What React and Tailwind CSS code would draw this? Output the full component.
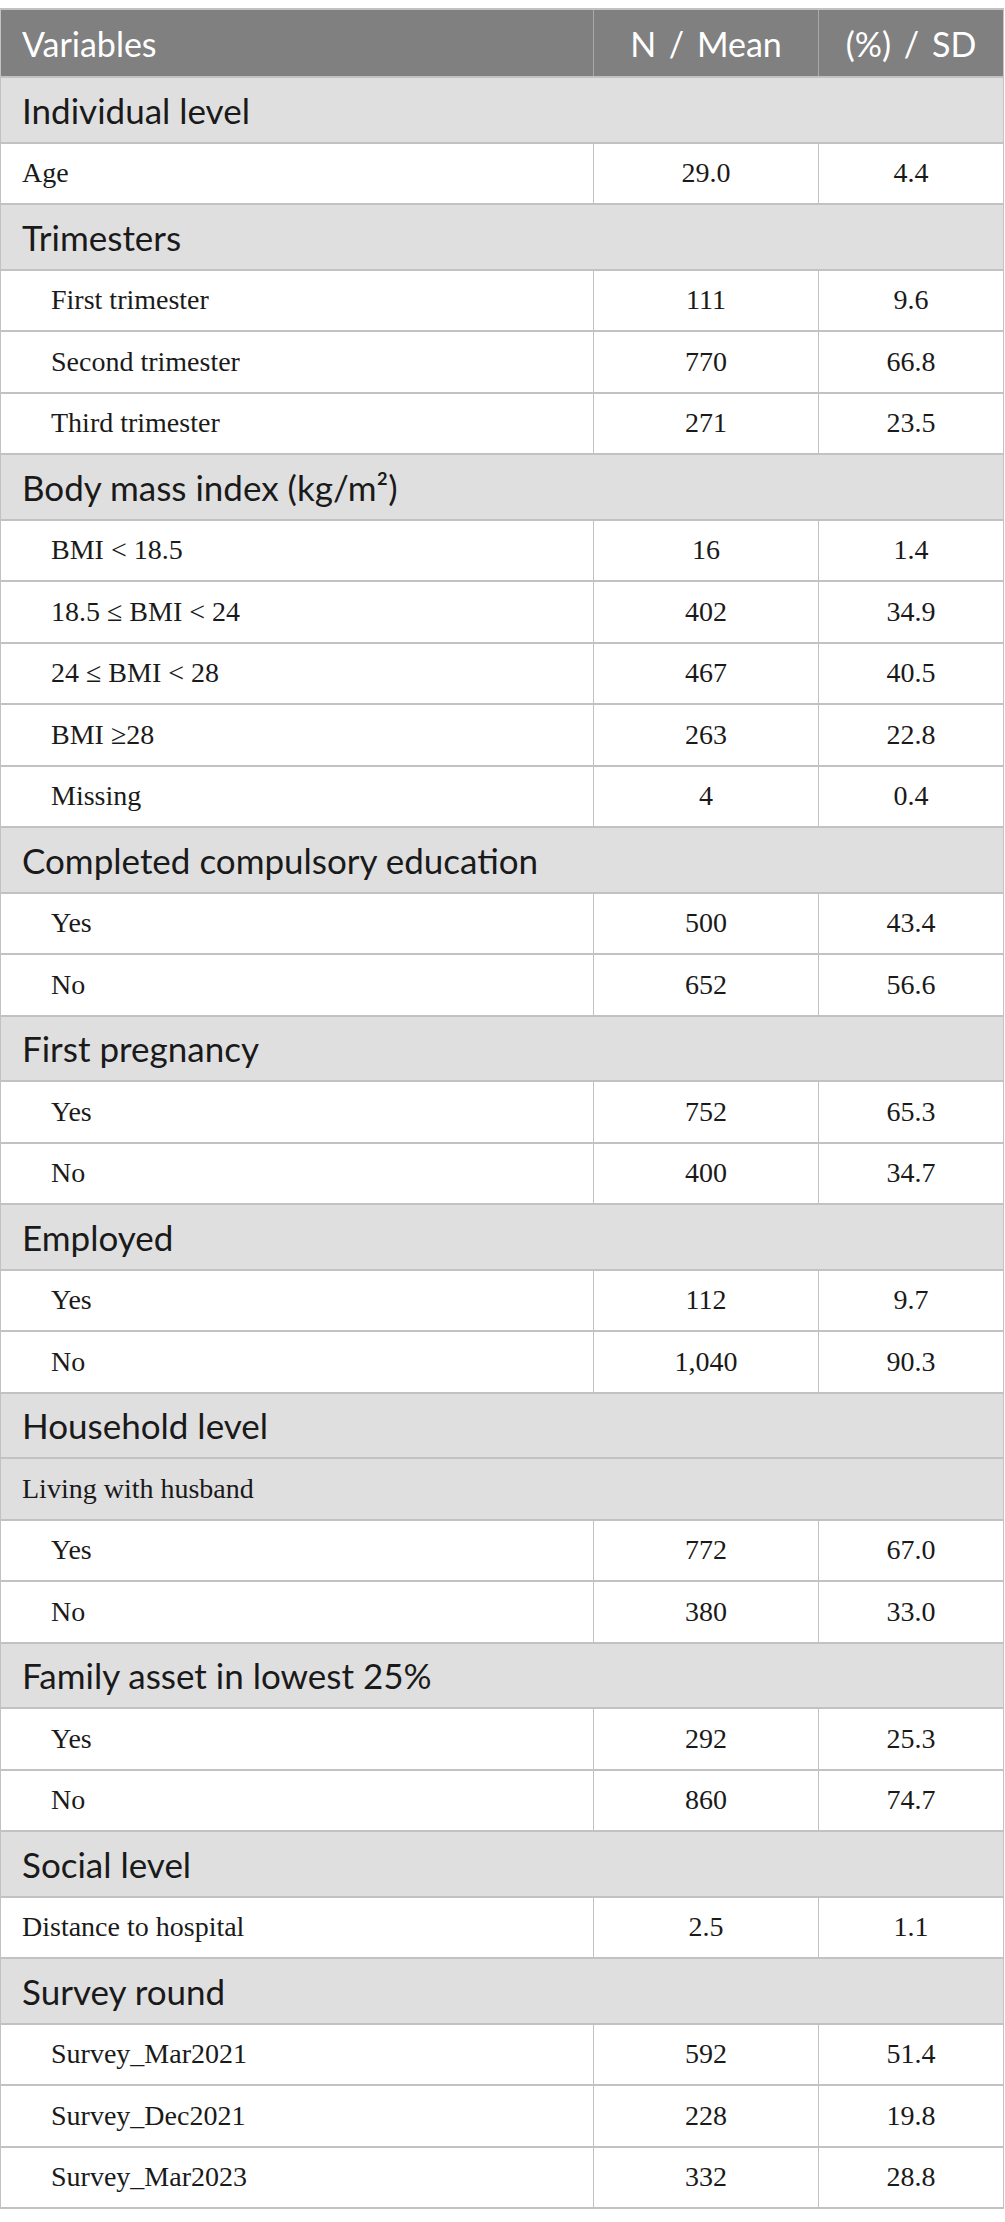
import React from "react";

const rows = [
  { type: "group", label: "Individual level" },
  { type: "row", label: "Age", n: "29.0", pct: "4.4" },
  { type: "group", label: "Trimesters" },
  { type: "row", label: "First trimester", n: "111", pct: "9.6", indent: true },
  { type: "row", label: "Second trimester", n: "770", pct: "66.8", indent: true },
  { type: "row", label: "Third trimester", n: "271", pct: "23.5", indent: true },
  { type: "group", label: "Body mass index (kg/m²)" },
  { type: "row", label: "BMI < 18.5", n: "16", pct: "1.4", indent: true },
  { type: "row", label: "18.5 ≤ BMI < 24", n: "402", pct: "34.9", indent: true },
  { type: "row", label: "24 ≤ BMI < 28", n: "467", pct: "40.5", indent: true },
  { type: "row", label: "BMI ≥28", n: "263", pct: "22.8", indent: true },
  { type: "row", label: "Missing", n: "4", pct: "0.4", indent: true },
  { type: "group", label: "Completed compulsory education" },
  { type: "row", label: "Yes", n: "500", pct: "43.4", indent: true },
  { type: "row", label: "No", n: "652", pct: "56.6", indent: true },
  { type: "group", label: "First pregnancy" },
  { type: "row", label: "Yes", n: "752", pct: "65.3", indent: true },
  { type: "row", label: "No", n: "400", pct: "34.7", indent: true },
  { type: "group", label: "Employed" },
  { type: "row", label: "Yes", n: "112", pct: "9.7", indent: true },
  { type: "row", label: "No", n: "1,040", pct: "90.3", indent: true },
  { type: "group", label: "Household level" },
  { type: "subgroup", label: "Living with husband" },
  { type: "row", label: "Yes", n: "772", pct: "67.0", indent: true },
  { type: "row", label: "No", n: "380", pct: "33.0", indent: true },
  { type: "group", label: "Family asset in lowest 25%" },
  { type: "row", label: "Yes", n: "292", pct: "25.3", indent: true },
  { type: "row", label: "No", n: "860", pct: "74.7", indent: true },
  { type: "group", label: "Social level" },
  { type: "row", label: "Distance to hospital", n: "2.5", pct: "1.1" },
  { type: "group", label: "Survey round" },
  { type: "row", label: "Survey_Mar2021", n: "592", pct: "51.4", indent: true },
  { type: "row", label: "Survey_Dec2021", n: "228", pct: "19.8", indent: true },
  { type: "row", label: "Survey_Mar2023", n: "332", pct: "28.8", indent: true },
];

const sans = "font-['Lato','Open_Sans',sans-serif]";
const serif = "font-['Liberation_Serif','Times_New_Roman',serif]";

function Row({ row }) {
  if (row.type === "group") {
    return (
      <div className={`h-[65.5px] flex items-center pl-[21px] bg-[#e0dfe0] border-b-2 border-[#c2c2c2] text-[35px] text-[#1a1a1a] ${sans}`}>
        {row.label}
      </div>
    );
  }
  if (row.type === "subgroup") {
    return (
      <div className={`h-[61.5px] flex items-center pl-[21px] bg-[#e0dfe0] border-b-2 border-[#c2c2c2] text-[28px] text-[#1a1a1a] ${serif}`}>
        {row.label}
      </div>
    );
  }
  return (
    <div className={`h-[61.5px] grid grid-cols-[593px_225px_1fr] border-b-2 border-[#c2c2c2] text-[28px] text-[#1a1a1a] ${serif}`}>
      <div className={`flex items-center ${row.indent ? "pl-[50px]" : "pl-[21px]"} border-r border-[#c2c2c2]`}>
        {row.label}
      </div>
      <div className="flex items-center justify-center border-r border-[#c2c2c2]">{row.n}</div>
      <div className="flex items-center justify-center">{row.pct}</div>
    </div>
  );
}

export default function App() {
  return (
    <div className="bg-white pt-[8px] pb-[19px]">
      <div className="w-[1004px] border-l border-r border-t-2 border-[#c2c2c2]">
        {/* Header */}
        <div className={`h-[68px] grid grid-cols-[593px_225px_1fr] bg-[#7f807f] text-white text-[34px] [word-spacing:4px] border-b-2 border-[#c2c2c2] ${sans}`}>
          <div className="flex items-center pl-[21px] border-r border-[#a9a9a9]">Variables</div>
          <div className="flex items-center justify-center border-r border-[#a9a9a9]">N / Mean</div>
          <div className="flex items-center justify-center">(%) / SD</div>
        </div>

        {rows.map((row, i) => (
          <Row key={i} row={row} />
        ))}
      </div>
    </div>
  );
}
